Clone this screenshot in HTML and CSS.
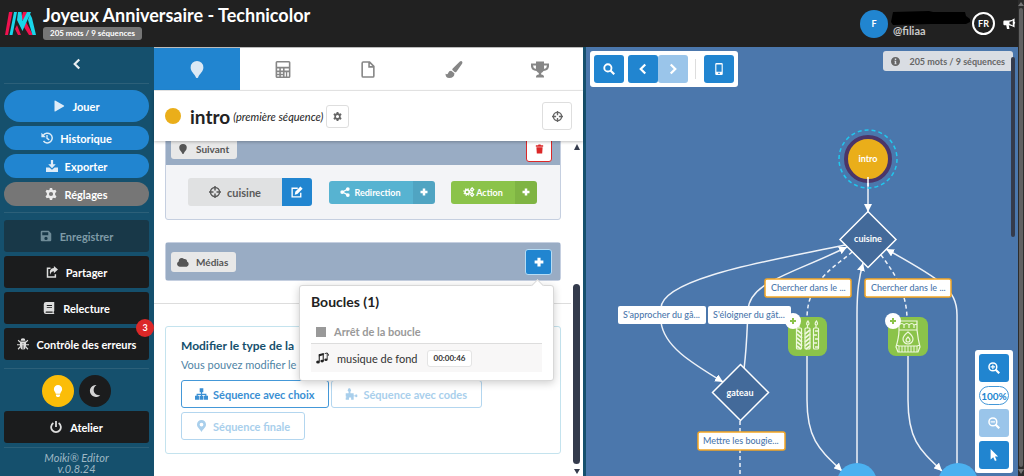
FILE: index.html
```
<!DOCTYPE html>
<html lang="fr">
<head>
<meta charset="UTF-8">
<title>Moiki Editor</title>
<link rel="stylesheet" href="styles.css">
</head>
<body>
<svg class="defs">
<symbol id="i-left" viewBox="0 0 16 16"><path d="M11 2 5 8l6 6" fill="none" stroke="currentColor" stroke-width="3"/></symbol>
<symbol id="i-right" viewBox="0 0 16 16"><path d="M5 2l6 6-6 6" fill="none" stroke="currentColor" stroke-width="3"/></symbol>
<symbol id="i-play" viewBox="0 0 16 16"><path d="M2 1.500Q2 0 3.500 1L14.500 7.200Q15.500 8 14.500 8.800L3.500 15Q2 16 2 14.500Z"/></symbol>
<symbol id="i-history" viewBox="0 0 16 16"><path d="M3 4.500A6.500 6.500 0 1 1 3.300 12" fill="none" stroke="currentColor" stroke-width="2"/><path d="M.5 1v6h6z"/><path d="M8 4v4.500l3 2" fill="none" stroke="currentColor" stroke-width="1.800"/></symbol>
<symbol id="i-download" viewBox="0 0 16 16"><path d="M6.500 0h3v5.500H13l-5 5.500-5-5.500h3.500zM0 10h4.500L8 13l3.500-3H16v6H0z"/></symbol>
<symbol id="i-gear" viewBox="0 0 16 16"><path fill-rule="evenodd" d="M6.500 0h3l.5 2.300 1.500.8 2.300-.8 1.500 2.700-1.800 1.600v2.800l1.800 1.600-1.500 2.700-2.300-.8-1.500.8-.5 2.300h-3L6 13.700l-1.500-.8-2.300.8L.7 11l1.800-1.600V6.600L.7 5l1.500-2.700 2.300.8L6 2.300zM8 5.200a2.800 2.800 0 1 0 0 5.600 2.800 2.800 0 0 0 0-5.600z"/></symbol>
<symbol id="i-save" viewBox="0 0 16 16"><path fill-rule="evenodd" d="M2.500 1h9L15 4.500v9q0 1.500-1.500 1.500h-11Q1 15 1 13.500v-11Q1 1 2.500 1zM3 3v4h8V3zm5 6a2.200 2.200 0 1 0 0 4.400A2.200 2.200 0 0 0 8 9z"/></symbol>
<symbol id="i-share" viewBox="0 0 16 16"><path d="M6 3H2v11.500h10.500V11" fill="none" stroke="currentColor" stroke-width="2"/><path d="M10.500 0 16 4.800l-5.500 4.700V7Q7 7 5.500 11.500 3.500 3.500 10.500 2.800z"/></symbol>
<symbol id="i-book" viewBox="0 0 16 16"><path fill-rule="evenodd" d="M4 0h11v12l-.7 1v1.500l.7.5v1H4q-3 0-3-3V3q0-3 3-3zm1 4v1.200h7V4zm0 2.500v1.200h7V6.500zM4 12.500q-1.500.9 0 1.700h8.800v-1.700z"/></symbol>
<symbol id="i-bug" viewBox="0 0 16 16"><path d="M4.800 3.500a3.200 3.200 0 0 1 6.400 0zM4 4.500h8v6.500q-.5 4-3.500 4.500V7h-1v8.500Q4.500 15 4 11z"/><path d="M1.500 3l3 2.800M14.500 3l-3 2.800M0 9h16M1.500 15l3-3.500M14.500 15l-3-3.500" fill="none" stroke="currentColor" stroke-width="1.600"/></symbol>
<symbol id="i-bulb" viewBox="0 0 16 16"><path d="M8 0a5.500 5.500 0 0 1 5.500 5.500c0 2.500-2 3.500-2.500 6H5c-.5-2.500-2.500-3.500-2.500-6A5.500 5.500 0 0 1 8 0zM5.300 12.500h5.400v1.700L9.500 16h-3l-1.200-1.800z"/></symbol>
<symbol id="i-moon" viewBox="0 0 16 16"><path d="M10 0a8 8 0 1 0 5 13.500C5.500 14.500 3.500 4 10 0z"/></symbol>
<symbol id="i-power" viewBox="0 0 16 16"><path d="M4.500 2.800a6.500 6.500 0 1 0 7 0M8 0v8" fill="none" stroke="currentColor" stroke-width="2.400"/></symbol>
<symbol id="i-marker" viewBox="0 0 16 16"><path d="M8 0a6 6 0 0 1 6 6c0 4-3.500 5.500-5 9.500q-1 1-2 0C5.500 11.500 2 10 2 6a6 6 0 0 1 6-6z"/></symbol>
<symbol id="i-pin" viewBox="0 0 16 16"><path fill-rule="evenodd" d="M8 0a6 6 0 0 1 6 6c0 4-3.500 5.500-6 10C5.500 11.500 2 10 2 6a6 6 0 0 1 6-6zm0 3.500a2.500 2.500 0 1 0 0 5 2.500 2.500 0 0 0 0-5z"/></symbol>
<symbol id="i-calc" viewBox="0 0 16 16"><path fill-rule="evenodd" d="M2.500 0h11Q15 0 15 1.500v13q0 1.500-1.500 1.500h-11Q1 16 1 14.500v-13Q1 0 2.500 0zM2.500 1.500v4h11v-4zm0 5.500v2h2V7zm3.500 0v2h2V7zm3.500 0v2h4V7zm-7 3.500v1.500h2v-1.500zm3.500 0v1.500h2v-1.500zm-3.500 3v1h2v-1zm3.500 0v1h2v-1zm3.500-3v4h1.200v-4zm2.500 0v4h1.500v-4z"/></symbol>
<symbol id="i-file" viewBox="0 0 16 16"><path d="M3.500 1h6l4 4v9q0 1-1 1h-9q-1 0-1-1V2q0-1 1-1zM9 1.500v4h4" fill="none" stroke="currentColor" stroke-width="1.500"/></symbol>
<symbol id="i-brush" viewBox="0 0 16 16"><path d="M13.500.4q1.500-.9 2.200.3.500.8-.1 1.800L10.300 10Q9.500 11 8.500 10.300L6.700 8.700Q6 8 6.800 7zM5.700 9.300l2.700 2.300Q8.500 16 3.500 16 0 16 0 12q2 1 2.500-.8.800-2.200 3.200-1.900z"/></symbol>
<symbol id="i-trophy" viewBox="0 0 18 16"><path fill-rule="evenodd" d="M5 0h8v2h5v3q-.5 4-5.500 4.600Q11.500 11 10.200 11.500V13q2.500 0 2.800 2v1H5v-1q.3-2 2.800-2v-1.500Q6.500 11 5.500 9.600.5 9 0 5V2h5zM2 4q0 2.500 2.800 3.400Q5 6.500 5 4zm11 0q0 2.400.2 3.400Q16 6.500 16 4z"/></symbol>
<symbol id="i-target" viewBox="0 0 16 16"><circle cx="8" cy="8" r="6" fill="none" stroke="currentColor" stroke-width="2"/><path d="M8 0v6M8 10v6M0 8h6M10 8h6" stroke="currentColor" stroke-width="2"/></symbol>
<symbol id="i-trash" viewBox="0 0 16 16"><path d="M1.500 1.500H5.500L6.200 0h3.600l.7 1.500h4V4h-13zM2.500 5h11l-.7 11H3.200z"/></symbol>
<symbol id="i-edit" viewBox="0 0 16 16"><path d="M9 3H1.500v11.500H13V9" fill="none" stroke="currentColor" stroke-width="1.800"/><path d="M12.500.7 15.500 3.700 8.500 10.700 5 11.500l.7-3.700z"/></symbol>
<symbol id="i-nodes" viewBox="0 0 16 16"><path d="M13 3 4 8l9 5" fill="none" stroke="currentColor" stroke-width="2"/><circle cx="12.500" cy="3.200" r="3"/><circle cx="3.500" cy="8" r="3"/><circle cx="12.500" cy="12.800" r="3"/></symbol>
<symbol id="i-gears" viewBox="0 0 18 16"><circle cx="6" cy="8" r="3.400" fill="none" stroke="currentColor" stroke-width="2.600"/><circle cx="6" cy="8" r="5.200" fill="none" stroke="currentColor" stroke-width="1.800" stroke-dasharray="2.300 1.780"/><circle cx="14" cy="4" r="2" fill="none" stroke="currentColor" stroke-width="2"/><circle cx="14" cy="12" r="2" fill="none" stroke="currentColor" stroke-width="2"/><path d="M14 0v2M14 6v4M14 14v2M11 4h1M16 4h1.500M11 12h1M16 12h1.500" stroke="currentColor" stroke-width="1.600"/></symbol>
<symbol id="i-plus" viewBox="0 0 16 16"><path d="M8 1v14M1 8h14" stroke="currentColor" stroke-width="5"/></symbol>
<symbol id="i-cloud" viewBox="0 0 18 14"><path d="M4 14a4 4 0 0 1-1.400-7.700A4.600 4.600 0 0 1 10.500 2.500 3.500 3.500 0 0 1 15 6.400 4 4 0 0 1 14.500 14z"/></symbol>
<symbol id="i-tree" viewBox="0 0 18 16"><path d="M9 4v8M3 12V8.500h12V12" fill="none" stroke="currentColor" stroke-width="1.600"/><path d="M6.500 0h5v5.500h-5zM0 10.500h5.500V16H0zM6.300 10.500h5.400V16H6.300zM12.500 10.500H18V16h-5.500z"/></symbol>
<symbol id="i-puzzle" viewBox="0 0 18 16"><path fill-rule="evenodd" d="M1 7h4V5L3.500 3 5 0h2l1.500 3L7.500 5v2H12v3h2l1-1.500 2 .5v3l-2 .5-1-1.500h-2v5H8.500v-3h-3v3H1v-3l1.500-1L1 11.500z"/></symbol>
<symbol id="i-music" viewBox="0 0 18 16"><path d="M4.500 13V3.500L10 2v10" fill="none" stroke="currentColor" stroke-width="1.500"/><path d="M4 3.500 10.600 1.600V4L4 6z"/><ellipse cx="2.800" cy="13.500" rx="2.600" ry="2.100"/><ellipse cx="8.500" cy="12.300" rx="2.400" ry="2"/><path d="M15.500 10V1L12 2M15.500 1.500q2.500.5 1.500 3.500" fill="none" stroke="currentColor" stroke-width="1.200"/><ellipse cx="13.800" cy="10.500" rx="2.300" ry="1.800"/></symbol>
<symbol id="i-search" viewBox="0 0 16 16"><circle cx="6.500" cy="6.500" r="4.800" fill="none" stroke="currentColor" stroke-width="2.500"/><path d="m10 10 5 5" stroke="currentColor" stroke-width="3"/></symbol>
<symbol id="i-zoomin" viewBox="0 0 16 16"><circle cx="6.500" cy="6.500" r="5.200" fill="none" stroke="currentColor" stroke-width="2"/><path d="m10 10 5 5" stroke="currentColor" stroke-width="3"/><path d="M6.500 3.500v6M3.500 6.500h6" stroke="currentColor" stroke-width="1.600"/></symbol>
<symbol id="i-zoomout" viewBox="0 0 16 16"><circle cx="6.500" cy="6.500" r="5.200" fill="none" stroke="currentColor" stroke-width="2"/><path d="m10 10 5 5" stroke="currentColor" stroke-width="3"/><path d="M3.500 6.500h6" stroke="currentColor" stroke-width="1.600"/></symbol>
<symbol id="i-phone" viewBox="0 0 16 16"><path fill-rule="evenodd" d="M4.500 0h7Q13 0 13 1.500v13q0 1.500-1.500 1.500h-7Q3 16 3 14.500v-13Q3 0 4.500 0zm0 2v9.500h7V2zM7 13v1.500h2V13z"/></symbol>
<symbol id="i-cursor" viewBox="0 0 16 16"><path d="M3.500 0 13.500 10H9.300l2.200 5-2.200 1L7 11l-3.500 3z"/></symbol>
<symbol id="i-info" viewBox="0 0 16 16"><path fill-rule="evenodd" d="M8 0a8 8 0 1 1 0 16A8 8 0 0 1 8 0zM6.700 2.800v2.400h2.600V2.800zM6 6.500V8h.8v3.500H6V13h4v-1.500h-.8v-5z"/></symbol>
<symbol id="i-horn" viewBox="0 0 18 16"><path fill-rule="evenodd" d="M16 0v5q2 1 0 3v5q-4-3-8-3.300L9 15H5.500L4.500 9.700H2Q.5 9.700.5 8V5q0-1.700 1.500-1.700h6Q12 3 16 0zm-2.500 3Q11 4.600 9 5v3q2 .4 4.500 2z"/></symbol>
</svg>

<div class="app">
<div class="page">
<header class="topbar">
    <svg class="logo" viewBox="0 0 31 23">
        <g fill="#f0124f"><path d="M4 0h3.500L3 23H0zM18 0h4l-3 9-3-2zM12 13l4 10h-3l-3-6zM21 10l7 13h-4l-5-8z"/></g>
        <g fill="#19d6ea"><path d="M9 0h3L7.500 23h-3zM13 0h3.500l1 9L22 0h4L17.500 19 12 8zM25 2l2 4 4 17h-3.500L23 8z"/></g>
    </svg>
    <div class="story">
        <h1>Joyeux Anniversaire - Technicolor</h1>
        <span class="count">205 mots / 9 séquences</span>
    </div>
    <div class="user">
        <span class="avatar">F</span>
        <div class="names">
            <svg class="masked" viewBox="0 0 80 14"><path d="M2 1 38 0l4 1h32l1 4 4 3v3l-4 2H40l-38 1-2-3z"/></svg>
            <span>@filiaa</span>
        </div>
        <button class="lang">FR</button>
        <button class="news" aria-label="Nouveautés"><svg><use href="#i-horn"/></svg></button>
    </div>
</header>

<main>
<nav class="sidebar">
    <button class="back" aria-label="Réduire"><svg><use href="#i-left"/></svg></button>
    <hr>
    <button class="pill big"><svg><use href="#i-play"/></svg>Jouer</button>
    <button class="pill"><svg><use href="#i-history"/></svg>Historique</button>
    <button class="pill"><svg><use href="#i-download"/></svg>Exporter</button>
    <button class="pill grey"><svg><use href="#i-gear"/></svg>Réglages</button>
    <hr class="low">
    <button class="dark" disabled><svg><use href="#i-save"/></svg>Enregistrer</button>
    <button class="dark"><svg><use href="#i-share"/></svg>Partager</button>
    <button class="dark"><svg><use href="#i-book"/></svg>Relecture</button>
    <button class="dark"><svg><use href="#i-bug"/></svg>Contrôle des erreurs<span class="errors">3</span></button>
    <hr class="mid">
    <div class="themes">
        <button class="light" aria-label="Thème clair"><svg><use href="#i-bulb"/></svg></button>
        <button aria-label="Thème sombre"><svg><use href="#i-moon"/></svg></button>
    </div>
    <button class="dark"><svg><use href="#i-power"/></svg>Atelier</button>
    <hr class="end">
    <p class="version">Moiki® Editor<br>v.0.8.24</p>
</nav>

<section class="panel">
    <div class="tabs">
        <button class="active" aria-label="Séquence"><svg><use href="#i-marker"/></svg></button>
        <button aria-label="Variables"><svg><use href="#i-calc"/></svg></button>
        <button aria-label="Notes"><svg><use href="#i-file"/></svg></button>
        <button aria-label="Apparence"><svg><use href="#i-brush"/></svg></button>
        <button aria-label="Trophées"><svg><use href="#i-trophy"/></svg></button>
    </div>
    <div class="seq-head">
        <span class="dot"></span>
        <h2>intro</h2>
        <em>(première séquence)</em>
        <button class="opts" aria-label="Options"><svg><use href="#i-gear"/></svg></button>
        <button class="locate" aria-label="Localiser"><svg><use href="#i-target"/></svg></button>
    </div>
    <div class="scroller">
        <div class="content">
            <div class="card next">
                <div class="card-head">
                    <span class="tag"><svg><use href="#i-marker"/></svg>Suivant</span>
                    <button class="trash" aria-label="Supprimer"><svg><use href="#i-trash"/></svg></button>
                </div>
                <div class="card-body">
                    <div class="split target"><button><svg><use href="#i-target"/></svg>cuisine</button><button class="edit" aria-label="Modifier"><svg><use href="#i-edit"/></svg></button></div>
                    <div class="split redirect"><button><svg><use href="#i-nodes"/></svg>Redirection</button><button class="add" aria-label="Ajouter une redirection"><svg><use href="#i-plus"/></svg></button></div>
                    <div class="split action"><button><svg><use href="#i-gears"/></svg>Action</button><button class="add" aria-label="Ajouter une action"><svg><use href="#i-plus"/></svg></button></div>
                </div>
            </div>
            <div class="card media">
                <div class="card-head">
                    <span class="tag"><svg><use href="#i-cloud"/></svg>Médias</span>
                    <button class="plus" aria-label="Ajouter un média"><svg><use href="#i-plus"/></svg></button>
                </div>
                <div class="popup">
                    <h3>Boucles (1)</h3>
                    <button class="stop"><span class="square"></span>Arrêt de la boucle</button>
                    <button class="track"><svg><use href="#i-music"/></svg>musique de fond<span class="time">00:00:46</span></button>
                </div>
            </div>
            <hr>
            <div class="type">
                <h4>Modifier le type de la</h4>
                <p>Vous pouvez modifier le t</p>
                <div class="choices">
                    <button class="on"><svg><use href="#i-tree"/></svg>Séquence avec choix</button>
                    <button disabled><svg><use href="#i-puzzle"/></svg>Séquence avec codes</button>
                    <button disabled><svg><use href="#i-pin"/></svg>Séquence finale</button>
                </div>
            </div>
        </div>
        <div class="bar"><i class="up"></i><i class="thumb"></i><i class="down"></i></div>
    </div>
</section>

<section class="canvas">
    <svg class="graph" width="432" height="429" viewBox="586 47 432 429">
        <defs>
            <marker id="arrow" viewBox="0 0 8 8" refX="8" refY="4" markerWidth="8" markerHeight="8" markerUnits="userSpaceOnUse" orient="auto"><path d="M0 0 8 4 0 8z" fill="#fff"/></marker>
        </defs>
        <!-- links -->
        <g class="link">
            <path d="M868 180V212" marker-end="url(#arrow)"/>
            <path d="M845 245C780 259 662 277 661 308V322C664 346 690 362 723 382" marker-end="url(#arrow)"/>
            <path d="M744 369C747 345 747 330 748 310C750 282 790 275 847 247" marker-end="url(#arrow)"/>
            <path d="M807 356V400C807 440 820 450 842 471" marker-end="url(#arrow)"/>
            <path d="M908 356V400C908 440 920 450 942 471" marker-end="url(#arrow)"/>
            <path d="M857 464V315C857 290 859 278 863 263" marker-end="url(#arrow)"/>
            <path d="M957 464V315C957 289 940 279 886 249" marker-end="url(#arrow)"/>
            <g stroke-dasharray="4 3">
                <path d="M852 252C835 267 808 280 807 317"/>
                <path d="M881 255C893 271 906 290 907 317"/>
                <path d="M740 421V476"/>
            </g>
        </g>
        <circle cx="868" cy="159" r="29" fill="none" stroke="#21c8ee" stroke-width="1.500" stroke-dasharray="4 3"/>
        <circle cx="868" cy="159" r="22" fill="#eaae1a" stroke="#4b3568" stroke-width="4"/>
        <path d="M868 177V186" stroke="#fff" stroke-width="1.500"/>
        <path class="diamond" d="M868 211.500 896 239.500 868 267.500 840 239.500z"/>
        <path class="diamond" d="M740.500 364.500 768.500 392.500 740.500 420.500 712.500 392.500z"/>
        <circle cx="857" cy="483" r="20" fill="#4bb1f0"/>
        <circle cx="958" cy="483" r="20" fill="#4bb1f0"/>
        <g class="name">
            <text x="868" y="162">intro</text>
            <text x="868" y="242">cuisine</text>
            <text x="740" y="396">gateau</text>
        </g>
        <g class="choice">
            <rect x="618" y="306" width="88" height="18" rx="2"/>
            <rect x="708" y="306" width="83" height="18" rx="2"/>
            <g stroke="#f5a623" stroke-width="1.500">
                <rect x="765" y="279" width="86" height="18" rx="2"/>
                <rect x="865" y="279" width="86" height="18" rx="2"/>
                <rect x="698" y="432" width="87" height="18" rx="2"/>
            </g>
            <text x="623" y="318">S'approcher du gâ...</text>
            <text x="713" y="318">S'éloigner du gât...</text>
            <text x="771" y="291">Chercher dans le ...</text>
            <text x="871" y="291">Chercher dans le ...</text>
            <text x="703" y="444">Mettre les bougie...</text>
        </g>
        <!-- candles -->
        <g fill="none" stroke="#eef8dd" stroke-width="1.200">
            <rect x="788" y="317" width="39" height="39" rx="8" fill="#8bc34a" stroke="none"/>
            <rect x="796.500" y="328" width="5" height="21" rx="1"/><rect x="805" y="328" width="5" height="21" rx="1"/><rect x="813.500" y="328" width="5" height="21" rx="1"/>
            <path d="M797 330l5 4M797 334l5 4M797 338l5 4M797 342l5 4M797 346l4 3M810 330l-5 4M810 334l-5 4M810 338l-5 4M810 342l-5 4M810 346l-4 3" stroke-width="1.700"/>
            <path d="M815 331h3M814 335h3M815 339h3M814 343h3M815 347h3" stroke-width="1.700"/>
            <path d="M799 328v-3M807.500 328v-3M816 328v-3M799 325q-2-1 0-3M807.500 325q-2-1 .5-4 2 3 0 4M816 325q-2-1 .5-4 2 3 0 4"/>
        </g>
        <!-- bag of flour -->
        <g fill="none" stroke="#eef8dd" stroke-width="1.200">
            <rect x="888" y="317" width="40" height="39" rx="8" fill="#8bc34a" stroke="none"/>
            <path d="M899 321h18v9q1 9 3 17l-2 5h-20l-2-5q3-10 3-17zM899 330h18M896 345l3 1h18l3-1M899 325q3-3 5 0v3M904 325q3-3 5 0v3M909 325q3-3 5 0v3M914 325l3-1"/>
            <path d="M899 346v6M902 346v6M905 346v6M908 346v6M911 346v6M914 346v6M917 346v6" stroke-width="1"/>
            <path d="M908 332q5 4 5 7a5 5 0 0 1-10 0q0-3 5-7zM908 337q2 2 2 3a2 2 0 0 1-4 0q0-1 2-3z"/>
        </g>
        <g fill="#fff"><circle cx="793" cy="321" r="8"/><circle cx="893" cy="321" r="8"/></g>
        <path d="M793 318v6M790 321h6M893 318v6M890 321h6" stroke="#8bc34a" stroke-width="2"/>
    </svg>
    <div class="tools">
        <button aria-label="Rechercher"><svg><use href="#i-search"/></svg></button>
        <div class="pair"><button aria-label="Précédent"><svg><use href="#i-left"/></svg></button><button disabled aria-label="Suivant"><svg><use href="#i-right"/></svg></button></div>
        <span class="sep"></span>
        <button aria-label="Aperçu mobile"><svg><use href="#i-phone"/></svg></button>
    </div>
    <div class="stats"><svg><use href="#i-info"/></svg>205 mots / 9 séquences</div>
    <div class="zoom">
        <button aria-label="Zoom avant"><svg><use href="#i-zoomin"/></svg></button>
        <button class="level">100%</button>
        <button disabled aria-label="Zoom arrière"><svg><use href="#i-zoomout"/></svg></button>
        <button aria-label="Sélection"><svg><use href="#i-cursor"/></svg></button>
    </div>
    <i class="canvas-bar"></i>
</section>
</main>
</div>
<div class="page-bar"><i class="up"></i><i class="thumb"></i><i class="down"></i></div>
</div>
</body>
</html>
```
FILE: styles.css
```
* {
box-sizing: border-box;
}
body {
margin: 0;
font-family: Lato, "Liberation Sans", sans-serif;
font-size: 11px;
color: #222;
}
h1, h2, h3, h4, p {
margin: 0;
}
button {
font-family: inherit;
font-size: 11px;
font-weight: bold;
border: none;
padding: 0;
margin: 0;
display: flex;
align-items: center;
justify-content: center;
cursor: pointer;
}
svg {
width: 12px;
height: 12px;
fill: currentColor;
flex: none;
}
.defs {
display: none;
}
.app {
display: flex;
height: 100vh;
overflow: hidden;
}
.page {
flex: 1;
min-width: 0;
display: flex;
flex-direction: column;
}

/* top bar */
.topbar {
height: 47px;
flex: none;
display: flex;
align-items: center;
background: #212121;
color: #fff;
padding: 0 2px 0 5px;
}
.logo {
width: 31px;
height: 23px;
}
.story {
margin-left: 7px;
padding-bottom: 4px;
display: flex;
flex-direction: column;
align-items: flex-start;
}
.story h1 {
font-size: 18px;
line-height: 24px;
}
.count {
background: #767676;
border-radius: 3px;
font-size: 8px;
font-weight: bold;
line-height: 13px;
padding: 0 7px;
}
.user {
margin-left: auto;
display: flex;
align-items: center;
}
.avatar {
width: 28px;
height: 28px;
border-radius: 50%;
background: #2185d0;
font-size: 9px;
font-weight: bold;
line-height: 28px;
text-align: center;
}
.names {
width: 80px;
margin: 0 1px 0 3px;
display: flex;
flex-direction: column;
font-weight: bold;
line-height: 12px;
color: #c8c8c8;
}
.names span {
padding-left: 2px;
}
.masked {
width: 80px;
height: 14px;
fill: #000;
}
.lang {
width: 23px;
height: 23px;
border: 2px solid #fff;
border-radius: 50%;
background: none;
color: #fff;
font-size: 9px;
}
.news {
background: none;
color: #fff;
margin-left: 8px;
}
.news svg {
width: 13px;
}

main {
flex: 1;
min-height: 0;
display: flex;
}

/* left menu */
.sidebar {
width: 154px;
flex: none;
background: #15506d;
padding: 1px 5px 0 4px;
display: flex;
flex-direction: column;
gap: 4px;
}
.sidebar hr {
width: 100%;
border: none;
height: 1px;
background: #2c6079;
margin: 0 0 2px;
flex: none;
}
.sidebar hr.low {
margin: 2px 0 3px;
}
.sidebar hr.mid {
margin: 4px 0 2px;
}
.sidebar hr.end {
margin: 0;
}
.back {
height: 31px;
background: none;
color: #e8eef1;
}
.pill {
height: 24px;
flex: none;
gap: 7px;
border-radius: 16px;
background: #2185d0;
color: #fff;
}
.big {
height: 32px;
}
.grey {
background: #767676;
}
.pill svg, .dark svg {
opacity: .85;
}
.dark {
position: relative;
height: 32px;
flex: none;
gap: 8px;
border-radius: 3px;
background: #1b1c1d;
color: #fff;
}
.dark:disabled {
background: #183848;
color: #7f9ba7;
}
.errors {
position: absolute;
top: -9px;
right: -5px;
width: 18px;
height: 18px;
border-radius: 50%;
background: #db2828;
font-size: 9px;
line-height: 18px;
}
.themes {
display: flex;
justify-content: center;
gap: 5px;
}
.themes button {
width: 32px;
height: 32px;
border-radius: 50%;
background: #1b1c1d;
color: #d4d4d4;
}
.themes .light {
background: #fbbd08;
color: #fff;
}
.version {
text-align: center;
font-style: italic;
line-height: 11px;
color: #9fb8c4;
}

/* middle panel */
.panel {
flex: 429 1 0;
min-width: 0;
background: #fff;
border-top: 1px solid #bbb;
display: flex;
flex-direction: column;
}
.tabs {
display: flex;
flex: none;
height: 43px;
border-bottom: 1px solid #ececec;
}
.tabs button {
flex: 1;
background: none;
color: #868686;
}
.tabs svg {
width: 18px;
height: 17px;
}
.tabs .active {
background: #2185d0;
color: #dbe9f5;
}
.seq-head {
position: relative;
z-index: 2;
flex: none;
height: 50px;
background: #fff;
box-shadow: 0 1px 3px rgba(0,0,0,.25);
display: flex;
align-items: center;
padding: 0 11px;
}
.dot {
width: 16px;
height: 16px;
border-radius: 50%;
background: #eaae1a;
}
.seq-head h2 {
font-size: 19px;
margin: 0 3px 0 9px;
}
.seq-head em {
font-size: 11px;
}
.opts, .locate {
border: 1px solid #dedede;
border-radius: 3px;
background: #fff;
color: #666;
}
.opts {
width: 23px;
height: 23px;
margin-left: 3px;
}
.opts svg {
width: 9px;
height: 9px;
}
.locate {
width: 30px;
height: 28px;
margin-left: auto;
}
.locate svg {
width: 11px;
height: 11px;
}
.scroller {
flex: 1;
min-height: 0;
overflow: hidden;
display: flex;
}
.content {
flex: 1;
min-width: 0;
margin-top: -10px;
}
.card {
margin: 0 0 22px 11px;
border: 1px solid #c5cfe0;
border-radius: 3px;
background: #f3f4f7;
}
.content > .card, .content > .type {
margin-right: 10px;
}
.card-head {
display: flex;
align-items: center;
justify-content: space-between;
height: 37px;
padding: 0 8px 0 5px;
background: #99acc4;
}
.next .card-head {
height: 33px;
}
.tag {
display: flex;
align-items: center;
gap: 7px;
height: 20px;
padding: 0 8px 0 6px;
border-radius: 3px;
background: #e8e8e8;
color: #555;
font-size: 10px;
font-weight: bold;
}
.tag svg {
height: 10px;
}
.trash {
width: 26px;
height: 26px;
border: 1px solid #db2828;
border-radius: 3px;
background: #fff;
color: #db2828;
}
.trash svg {
width: 9px;
height: 10px;
}
.card-body {
display: flex;
align-items: center;
justify-content: space-between;
height: 54px;
padding: 0 23px 0 22px;
}
.split {
display: flex;
border-radius: 3px;
overflow: hidden;
}
.split button {
height: 23px;
gap: 4px;
color: #fff;
font-size: 9px;
}
.split svg {
width: 10px;
height: 10px;
}
.target button {
width: 94px;
height: 28px;
gap: 6px;
background: #e0e1e2;
color: #5a5a5a;
font-size: 11px;
}
.target .edit {
width: 30px;
background: #2185d0;
color: #fff;
}
.target svg {
width: 12px;
height: 12px;
}
.redirect button {
width: 84px;
background: #57b3d1;
}
.action button {
width: 64px;
gap: 1px;
background: #8bc34a;
}
.split .add {
width: 22px;
background: #50a4c2;
}
.action .add {
background: #7fb443;
}
.action svg {
width: 12px;
}
.split .add svg {
width: 8px;
height: 8px;
}
.media {
position: relative;
z-index: 1;
}
.plus {
width: 27px;
height: 26px;
border: 1px solid #b5dcf5;
border-radius: 3px;
background: #2185d0;
color: #fff;
}
.plus svg {
width: 10px;
height: 10px;
}
.popup {
position: absolute;
top: 42px;
right: 6px;
width: 255px;
padding: 6px 11px 8px;
background: #fff;
border: 1px solid #d8d8d8;
border-radius: 3px;
box-shadow: 0 2px 8px rgba(0,0,0,.2);
}
.popup::before {
content: "";
position: absolute;
top: -5px;
right: 11px;
width: 8px;
height: 8px;
background: #fff;
border: 1px solid #d8d8d8;
border-width: 1px 0 0 1px;
transform: rotate(45deg);
}
.popup h3 {
font-size: 14px;
line-height: 20px;
margin-bottom: 8px;
}
.popup button {
width: 100%;
justify-content: flex-start;
padding-left: 5px;
background: none;
}
.stop {
height: 24px;
border-bottom: 1px solid #ddd;
color: #999;
}
.square {
width: 10px;
height: 10px;
margin-right: 8px;
background: #999;
}
.popup .track {
height: 28px;
background: #f8f7f7;
color: #333;
font-weight: normal;
}
.track svg {
width: 13px;
margin-right: 8px;
color: #222;
}
.time {
margin-left: 9px;
padding: 0 6px;
border: 1px solid #e4e4e4;
border-radius: 3px;
background: #fff;
font-size: 8px;
font-weight: bold;
line-height: 15px;
}
.content hr {
border: none;
height: 1px;
margin: 0;
background: #ddd;
}
.type {
margin: 22px 0 0 11px;
padding: 10px 15px 13px;
border: 1px solid #c4e3ee;
border-radius: 3px;
}
.type h4 {
font-size: 12px;
line-height: 18px;
color: #15506d;
}
.type p {
line-height: 20px;
color: #4f84a5;
}
.choices {
display: flex;
flex-wrap: wrap;
gap: 4px 2px;
margin-top: 5px;
}
.choices button {
height: 28px;
padding: 0 14px 0 13px;
gap: 5px;
border: 1px solid #b3d6ef;
border-radius: 3px;
background: #fff;
color: #a9cfec;
}
.choices svg {
width: 13px;
}
.choices .on {
border-color: #4498d8;
color: #3a8fd3;
}
.bar {
width: 12px;
flex: none;
padding: 3px 3px 0 2px;
display: flex;
flex-direction: column;
align-items: center;
color: #343b4c;
}
.up, .down {
border: 3px solid transparent;
}
.up {
border-bottom: 6px solid;
border-top: none;
}
.down {
border-top: 5px solid;
border-bottom: none;
}
.bar .thumb {
width: 7px;
height: 180px;
margin-top: auto;
border-radius: 4px;
background: #343b4c;
}
.bar .down {
margin: 5px 0 2px;
}

/* graph */
.canvas {
position: relative;
flex: 432 1 0;
min-width: 0;
overflow: hidden;
border-left: 3px solid #15506d;
background: #4b77ac;
}
.graph {
position: absolute;
top: 0;
left: 0;
width: 432px;
height: 429px;
}
.link {
fill: none;
stroke: #eef2f8;
stroke-width: 1.5px;
}
.diamond {
fill: #436a9a;
stroke: #fff;
stroke-width: 1.5px;
}
.name text {
fill: #fff;
font-size: 9px;
font-weight: bold;
text-anchor: middle;
}
.choice rect {
fill: #fff;
}
.choice text {
fill: #4b77ac;
font-size: 9px;
font-weight: 500;
}
.tools, .zoom {
position: absolute;
display: flex;
gap: 4px;
padding: 4px;
border-radius: 3px;
background: #fff;
}
.tools {
top: 4px;
left: 4px;
}
.canvas button {
width: 30px;
height: 28px;
border-radius: 3px;
background: #2185d0;
color: #fff;
}
.canvas button:disabled {
background: #9ac5ea;
}
.pair {
display: flex;
}
.sep {
width: 1px;
margin: 4px 4px 4px 3px;
background: #ddd;
}
.stats {
position: absolute;
top: 4px;
right: 5px;
display: flex;
align-items: center;
gap: 9px;
height: 20px;
padding: 0 8px;
border-radius: 3px;
background: #d9dde3;
color: #666;
font-size: 9px;
font-weight: bold;
}
.stats svg {
width: 9px;
height: 9px;
}
.zoom {
right: 5px;
bottom: 3px;
flex-direction: column;
}
.canvas .level {
height: 19px;
border: 1px solid #4498d8;
border-radius: 10px;
background: #fff;
color: #2185d0;
font-size: 10px;
}
.canvas-bar {
position: absolute;
top: 10px;
right: 3px;
width: 4px;
height: 180px;
border-radius: 2px;
background: #343b4c;
}
.page-bar {
width: 6px;
flex: none;
padding: 2px 0;
display: flex;
flex-direction: column;
align-items: center;
background: #2c2c2c;
color: #777;
}
.page-bar .thumb {
width: 4px;
flex: 1;
margin: 2px 0;
border-radius: 2px;
background: #616161;
}
.page-bar .up {
border-bottom-width: 4px;
}
```
